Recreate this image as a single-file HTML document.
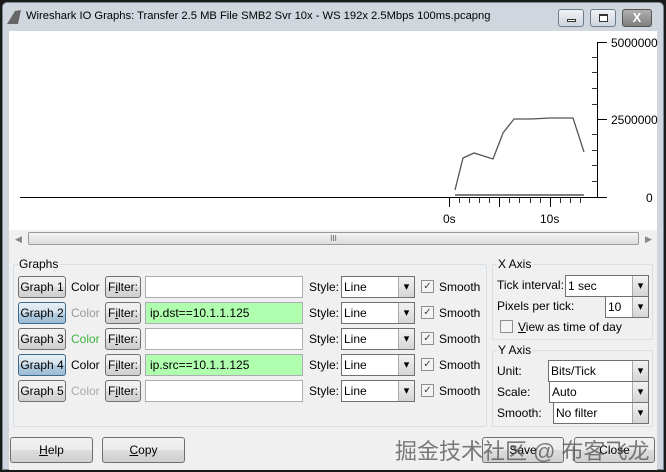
<!DOCTYPE html>
<html><head><meta charset="utf-8"><style>
*{box-sizing:border-box}
body{margin:0;width:666px;height:472px;overflow:hidden;background:#1a1a1a;font-family:"Liberation Sans","DejaVu Sans",sans-serif;font-size:12px;color:#000;position:relative}
.a{position:absolute}
.btn{position:absolute;border:1px solid #707070;border-radius:3px;background:linear-gradient(#f2f2f2,#ebebeb 50%,#dddddd 51%,#cfcfcf);text-align:center;line-height:20px;height:22px;font-size:12px}
.btn.b{background:linear-gradient(#e8f0f6,#d0e0ec 50%,#b5cde0 51%,#9dbcd4);border-color:#3c6a8e}
.inp{position:absolute;background:#fff;border:1px solid #abadb3;height:22px;line-height:20px;padding-left:4px;font-size:12px}
.sel{position:absolute;background:#fff;border:1px solid #707070;height:22px;line-height:20px;padding-left:2px}
.sel::after{content:"▾";position:absolute;right:0;top:0;width:15px;height:20px;background:linear-gradient(#f2f2f2,#d5d5d5);border-left:1px solid #aaa;text-align:center;font-size:11px}
.cb{position:absolute;width:13px;height:13px;border:1px solid #8f8f8f;background:#f4f4f4;font-size:10px;line-height:11px;text-align:center;color:#444}
.grp{position:absolute;border:1px solid #d5dfe5;border-radius:2px}
.gl{position:absolute;top:-8px;left:4px;background:#f0f0f0;padding:0 1px}
</style></head><body>
<div class="a" style="left:2px;top:2px;width:662px;height:468px;background:#cfd6de;border:1px solid #7a8896;border-radius:5px 5px 0 0"></div>
<svg class="a" style="left:6px;top:9px" width="16" height="16"><path d="M1 15 L9 2 L15 1 L12 15 Z" fill="#666"/></svg>
<div class="a" style="left:26px;top:10px;font-size:11.2px;white-space:nowrap">Wireshark IO Graphs: Transfer 2.5 MB File SMB2 Svr 10x - WS 192x 2.5Mbps 100ms.pcapng</div>
<div class="a" style="left:558px;top:9px;width:26px;height:18px;border:1px solid #6d7d8c;border-radius:3px;background:linear-gradient(#f0f3f6,#cdd4dc)"><div class="a" style="left:8px;top:9px;width:9px;height:3px;border:1px solid #333;background:#fff"></div></div>
<div class="a" style="left:590px;top:9px;width:26px;height:18px;border:1px solid #6d7d8c;border-radius:3px;background:linear-gradient(#f0f3f6,#cdd4dc)"><div class="a" style="left:8px;top:4px;width:9px;height:8px;border:1px solid #333;border-top-width:2px;background:#fff"></div></div>
<div class="a" style="left:622px;top:9px;width:30px;height:18px;border:1px solid #555;border-radius:3px;background:linear-gradient(#b0b0b0,#7e7e7e);color:#fff;font-weight:bold;text-align:center;line-height:16px;font-size:13px">X</div>
<div class="a" style="left:9px;top:31px;width:648px;height:199px;background:#fff"></div>
<div class="a" style="left:9px;top:230px;width:648px;height:240px;background:#f0f0f0"></div>
<svg class="a" style="left:0;top:0" width="666" height="230">
<g stroke="#000" stroke-width="1" fill="none">
<line x1="20" y1="197.5" x2="607" y2="197.5"/>
<line x1="597.5" y1="42" x2="597.5" y2="197"/>
<line x1="597" y1="42.5" x2="607" y2="42.5"/>
<line x1="597" y1="119.5" x2="607" y2="119.5"/>
<g stroke="#333"><line x1="592" y1="57.5" x2="597" y2="57.5"/><line x1="592" y1="72.5" x2="597" y2="72.5"/><line x1="592" y1="88.5" x2="597" y2="88.5"/><line x1="592" y1="104.5" x2="597" y2="104.5"/><line x1="592" y1="134.5" x2="597" y2="134.5"/><line x1="592" y1="150.5" x2="597" y2="150.5"/><line x1="592" y1="165.5" x2="597" y2="165.5"/><line x1="592" y1="181.5" x2="597" y2="181.5"/></g>
<line x1="449.5" y1="197" x2="449.5" y2="207"/><line x1="499.5" y1="197" x2="499.5" y2="207"/><line x1="550.5" y1="197" x2="550.5" y2="207"/>
<g stroke="#333"><line x1="459.5" y1="198" x2="459.5" y2="203"/><line x1="469.5" y1="198" x2="469.5" y2="203"/><line x1="479.5" y1="198" x2="479.5" y2="203"/><line x1="489.5" y1="198" x2="489.5" y2="203"/><line x1="509.5" y1="198" x2="509.5" y2="203"/><line x1="519.5" y1="198" x2="519.5" y2="203"/><line x1="530.5" y1="198" x2="530.5" y2="203"/><line x1="540.5" y1="198" x2="540.5" y2="203"/><line x1="560.5" y1="198" x2="560.5" y2="203"/><line x1="570.5" y1="198" x2="570.5" y2="203"/><line x1="580.5" y1="198" x2="580.5" y2="203"/></g>
<polyline stroke="#555" stroke-width="1.3" points="455,190 463,158 474,153 493,159 503,133 514,119 531,119 550,118 573,118 584,152"/>
<line stroke="#555" stroke-width="1.5" x1="455" y1="195" x2="584" y2="195"/>
</g>
<g font-family="Liberation Sans" font-size="12" fill="#000">
<text x="611" y="47">5000000</text><text x="611" y="124">2500000</text><text x="646" y="202">0</text>
<text x="443" y="223">0s</text><text x="540" y="223">10s</text></g>
</svg>
<div class="a" style="left:13px;top:231px;width:627px;height:16px;background:#f0f0f0"></div>
<div class="a" style="left:15px;top:234px;font-size:9px;color:#888">◀</div>
<div class="a" style="left:28px;top:232px;width:611px;height:13px;border:1px solid #9a9a9a;border-radius:2px;background:linear-gradient(#f4f4f4,#dcdcdc);text-align:center;font-size:8px;line-height:11px;color:#555">III</div>
<div class="a" style="left:645px;top:234px;font-size:9px;color:#888">▶</div>

<div class="grp" style="left:13px;top:264px;width:474px;height:163px"><span class="gl">Graphs</span></div>
<div class="grp" style="left:492px;top:264px;width:161px;height:76px"><span class="gl">X Axis</span></div>
<div class="grp" style="left:492px;top:350px;width:161px;height:77px"><span class="gl">Y Axis</span></div>

<div class="btn" style="left:18px;top:276px;width:48px">Graph 1</div>
<div class="a" style="left:71px;top:280px">Color</div>
<div class="btn" style="left:105px;top:276px;width:36px">F<u>i</u>lter:</div>
<div class="inp" style="left:145px;top:276px;width:158px"></div>
<div class="a" style="left:309px;top:280px">Style:</div>
<div class="sel" style="left:341px;top:276px;width:74px">Line</div>
<div class="cb" style="left:421px;top:280px">✓</div><div class="a" style="left:439px;top:280px">Smooth</div>

<div class="btn b" style="left:18px;top:302px;width:48px">Graph 2</div>
<div class="a" style="left:71px;top:306px;color:#999">Color</div>
<div class="btn" style="left:105px;top:302px;width:36px">F<u>i</u>lter:</div>
<div class="inp" style="left:145px;top:302px;width:158px;background:#afffaf">ip.dst==10.1.1.125</div>
<div class="a" style="left:309px;top:306px">Style:</div>
<div class="sel" style="left:341px;top:302px;width:74px">Line</div>
<div class="cb" style="left:421px;top:306px">✓</div><div class="a" style="left:439px;top:306px">Smooth</div>

<div class="btn" style="left:18px;top:328px;width:48px">Graph 3</div>
<div class="a" style="left:71px;top:332px;color:#3cb43c">Color</div>
<div class="btn" style="left:105px;top:328px;width:36px">F<u>i</u>lter:</div>
<div class="inp" style="left:145px;top:328px;width:158px"></div>
<div class="a" style="left:309px;top:332px">Style:</div>
<div class="sel" style="left:341px;top:328px;width:74px">Line</div>
<div class="cb" style="left:421px;top:332px">✓</div><div class="a" style="left:439px;top:332px">Smooth</div>

<div class="btn b" style="left:18px;top:354px;width:48px">Graph 4</div>
<div class="a" style="left:71px;top:358px">Color</div>
<div class="btn" style="left:105px;top:354px;width:36px">F<u>i</u>lter:</div>
<div class="inp" style="left:145px;top:354px;width:158px;background:#afffaf">ip.src==10.1.1.125</div>
<div class="a" style="left:309px;top:358px">Style:</div>
<div class="sel" style="left:341px;top:354px;width:74px">Line</div>
<div class="cb" style="left:421px;top:358px">✓</div><div class="a" style="left:439px;top:358px">Smooth</div>

<div class="btn" style="left:18px;top:380px;width:48px">Graph 5</div>
<div class="a" style="left:71px;top:384px;color:#aaa">Color</div>
<div class="btn" style="left:105px;top:380px;width:36px">F<u>i</u>lter:</div>
<div class="inp" style="left:145px;top:380px;width:158px"></div>
<div class="a" style="left:309px;top:384px">Style:</div>
<div class="sel" style="left:341px;top:380px;width:74px">Line</div>
<div class="cb" style="left:421px;top:384px">✓</div><div class="a" style="left:439px;top:384px">Smooth</div>

<div class="a" style="left:497px;top:278px">Tick interval:</div>
<div class="sel" style="left:565px;top:275px;width:84px">1 sec</div>
<div class="a" style="left:497px;top:299px">Pixels per tick:</div>
<div class="sel" style="left:605px;top:296px;width:44px">10</div>
<div class="cb" style="left:500px;top:320px"></div>
<div class="a" style="left:518px;top:320px"><u>V</u>iew as time of day</div>

<div class="a" style="left:497px;top:364px">Unit:</div>
<div class="sel" style="left:548px;top:360px;width:101px">Bits/Tick</div>
<div class="a" style="left:497px;top:385px">Scale:</div>
<div class="sel" style="left:549px;top:381px;width:100px">Auto</div>
<div class="a" style="left:497px;top:406px">Smooth:</div>
<div class="sel" style="left:553px;top:402px;width:96px">No filter</div>

<div class="btn" style="left:10px;top:437px;width:83px;height:26px;line-height:24px"><u>H</u>elp</div>
<div class="btn" style="left:102px;top:437px;width:83px;height:26px;line-height:24px"><u>C</u>opy</div>
<div class="btn" style="left:482px;top:437px;width:82px;height:26px;line-height:24px">Save</div>
<div class="btn" style="left:574px;top:437px;width:81px;height:26px;line-height:24px">Close</div>
<div class="a" style="left:395px;top:434px;font-family:'Liberation Sans','Noto Sans CJK SC',sans-serif;font-size:22px;color:rgba(80,80,80,0.75);white-space:nowrap">掘金技术社区 @ 布客飞龙</div>
</body></html>
